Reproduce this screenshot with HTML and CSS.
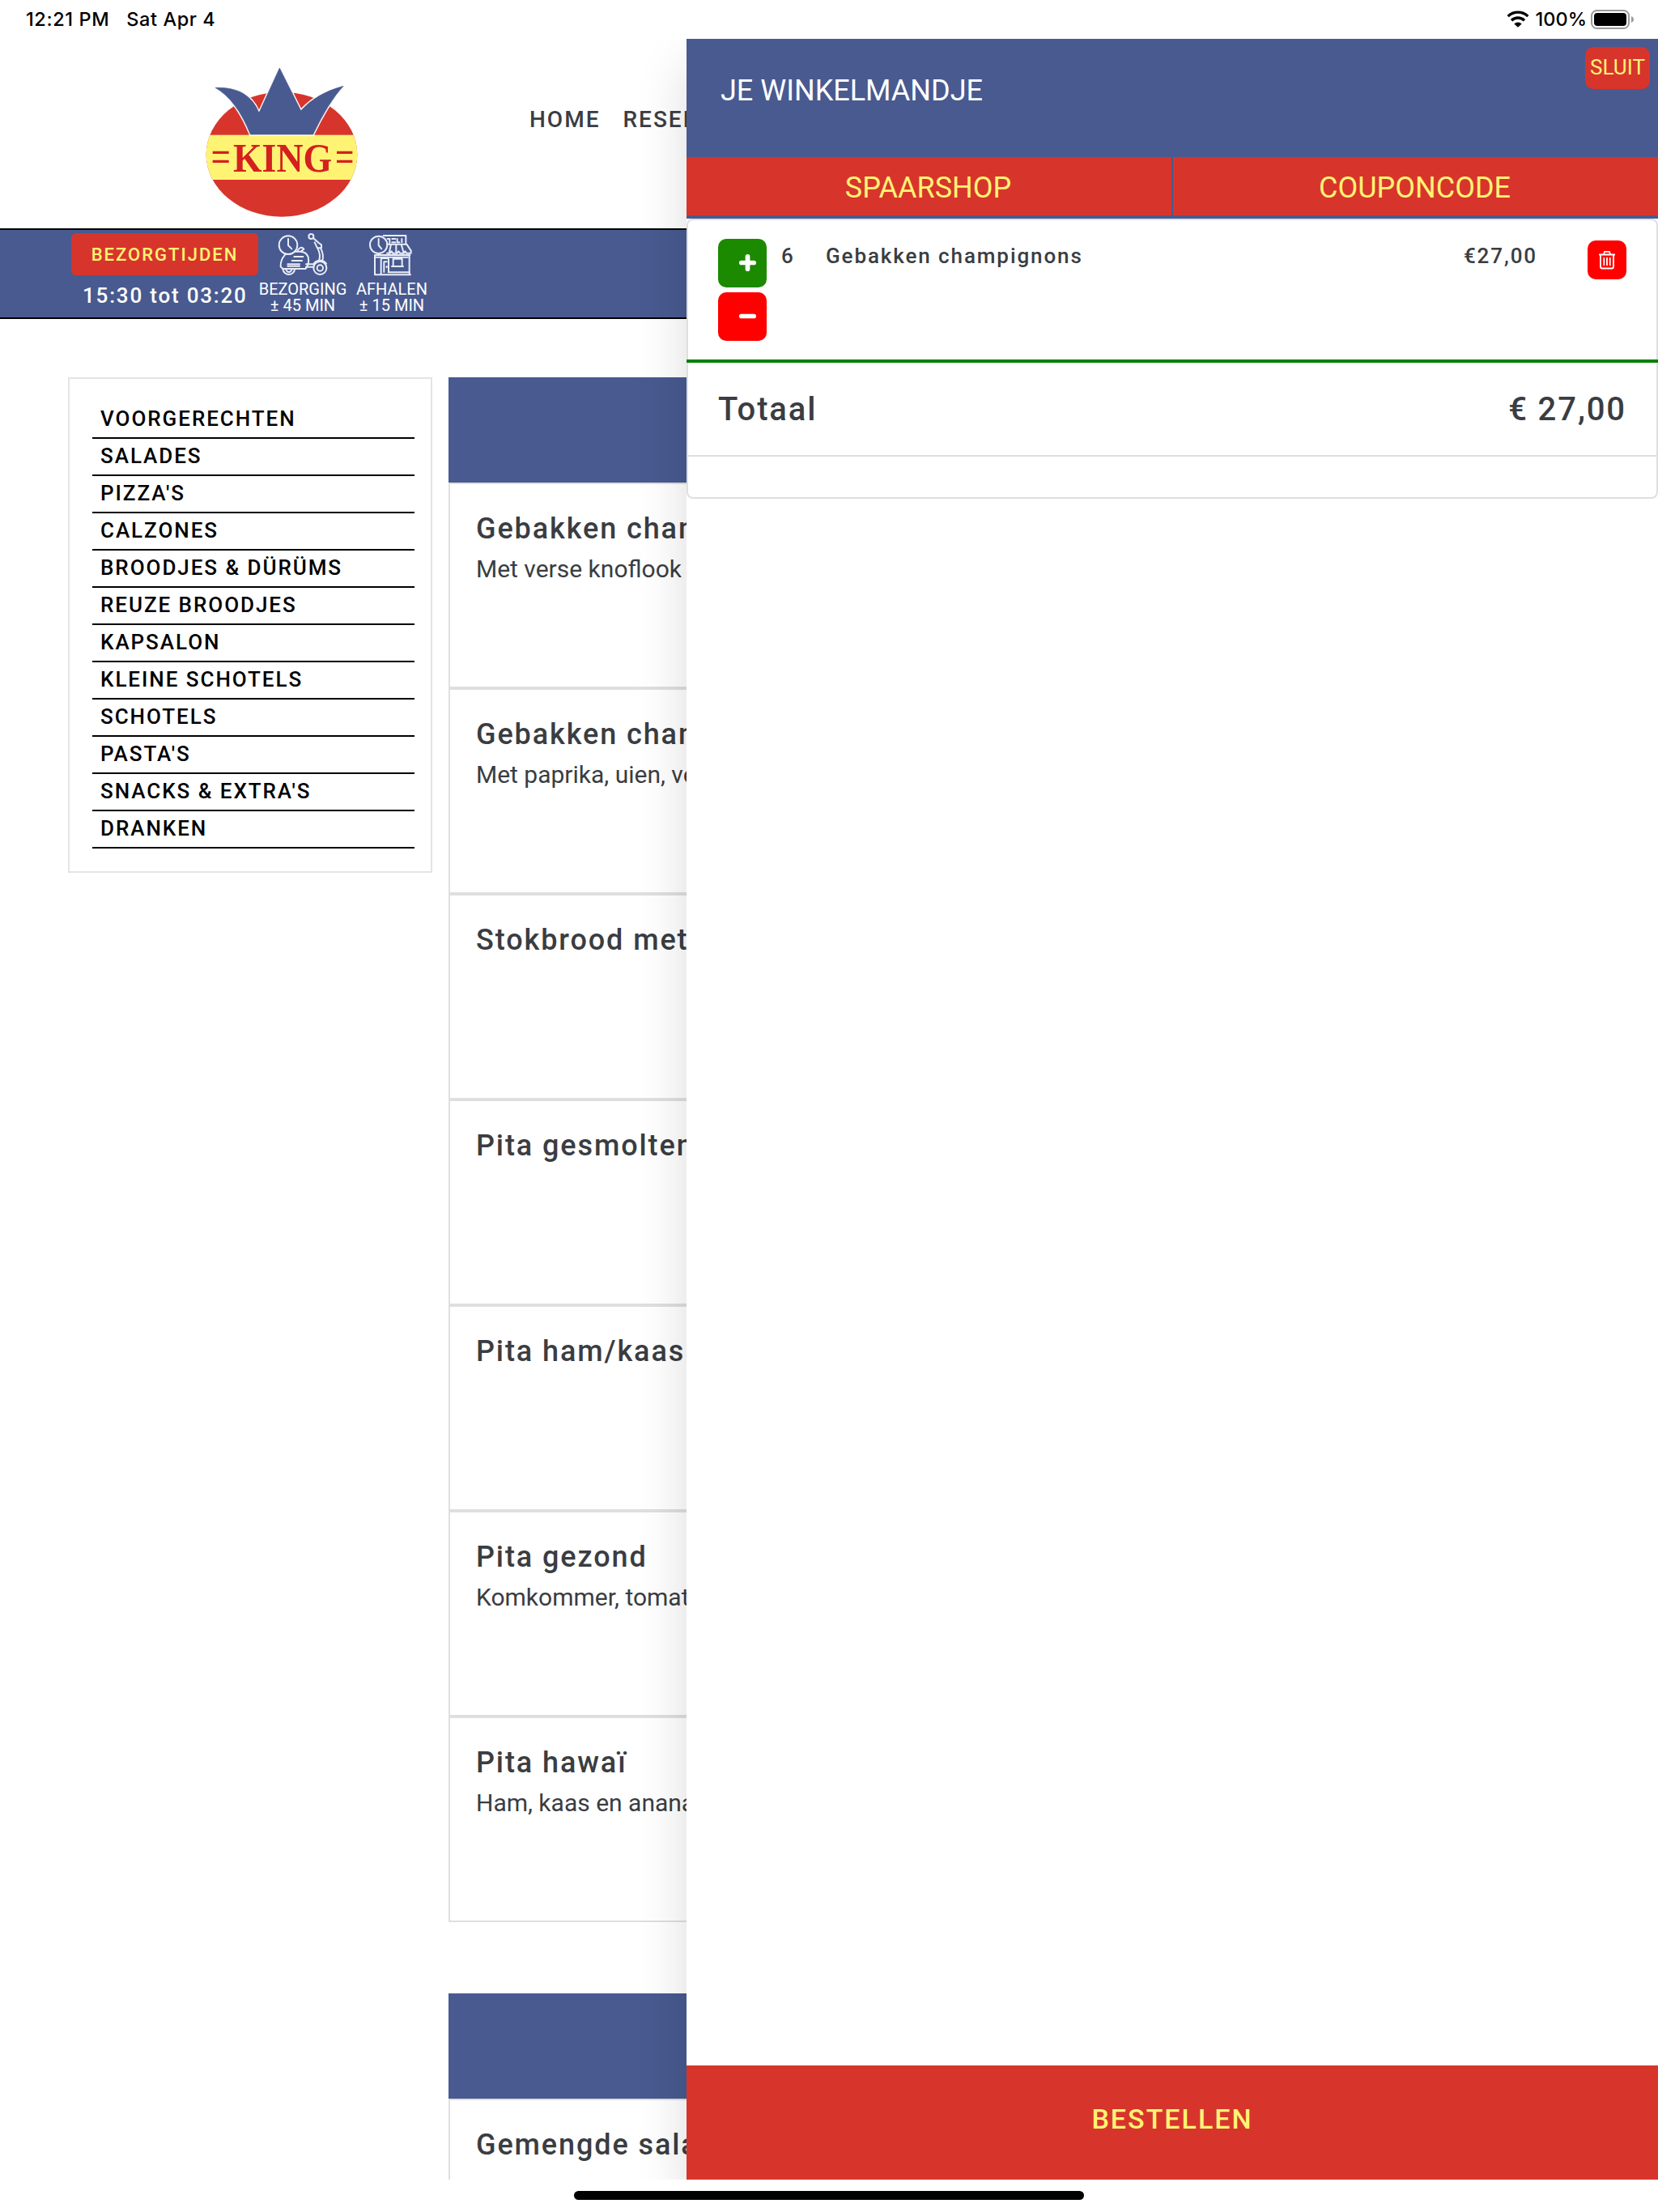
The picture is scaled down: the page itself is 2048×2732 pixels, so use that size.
FILE: index.html
```html
<!DOCTYPE html>
<html lang="nl">
<head>
    <meta charset="UTF-8">
    <meta name="viewport" content="width=device-width, initial-scale=1.0">
    <title>King - Bestellen</title>
    <link rel="stylesheet" href="styles.css">
</head>
<body>
    <div class="statusbar">
        <span class="time">12:21 PM</span>
        <span class="date">Sat Apr 4</span>
        <svg class="wifi" viewBox="0 0 84 62">
            <path d="M5 21a53 53 0 0 1 74 0" fill="none" stroke="#000" stroke-width="10"/>
            <path d="M18 36a35 35 0 0 1 48 0" fill="none" stroke="#000" stroke-width="10"/>
            <path d="M28 49a20 20 0 0 1 28 0L42 62z"/>
        </svg>
        <span class="percent">100%</span>
        <svg class="battery" viewBox="0 0 54 24">
            <rect x="1" y="1" width="46" height="22" rx="6.5" fill="none" stroke="#9b9b9b" stroke-width="2"/>
            <rect x="4" y="4" width="40" height="16" rx="4"/>
            <path d="M50 8c4 1.500 4 6.500 0 8z" fill="#9b9b9b"/>
        </svg>
    </div>

    <div class="page">
        <header class="header">
            <svg class="logo" viewBox="0 0 690 630">
                <clipPath id="ball"><ellipse cx="354" cy="362" rx="280" ry="231"/></clipPath>
                <g clip-path="url(#ball)">
                    <rect width="690" height="630" fill="#d7352c"/>
                    <rect y="290" width="690" height="166" fill="#fff374"/>
                    <path d="M108 115Q231 110 270 208L346 42L425 200Q482 136 582 109Q526 171 470 288H238Q186 159 108 115z" fill="#fff" stroke="#fff" stroke-width="10"/>
                </g>
                <path d="M108 115Q231 110 270 208L346 42L425 200Q482 136 582 109Q526 171 470 288H238Q186 159 108 115z" fill="#485a90" stroke="#485a90" stroke-width="2"/>
                <path d="M98 355h60M98 388h60M558 355h58M558 388h58" stroke="#d4201f" stroke-width="10"/>
                <text class="logo-text" x="174" y="427" textLength="366" lengthAdjust="spacingAndGlyphs">KING</text>
            </svg>
            <nav class="nav">
                <a>HOME</a>
                <a>RESERVEREN</a>
            </nav>
        </header>

        <div class="infobar">
            <div class="times">
                <button class="times-btn">BEZORGTIJDEN</button>
                <div class="times-text">15:30 tot 03:20</div>
            </div>
            <div class="info info-delivery">
                <!-- scooter -->
                <svg class="info-icon" viewBox="18 8 192 162" fill="none" stroke="#e9edf8" stroke-width="6" stroke-linejoin="round" stroke-linecap="round">
                    <ellipse cx="60" cy="55" rx="34" ry="34"/>
                    <path d="M60 32v24l13 13M95 76c6-12 15-16 23-6l-10 8M48 91c-11 13-17 27-16 44l8 8h84c10-11 13-29 10-44-5-14-16-20-31-20H84"/>
                    <path d="M82 98h33M74 113h37M58 126h44M58 133h44M40 143c4 28 40 28 45 0M52 146c4 12 17 12 21 0"/>
                    <circle cx="145" cy="23" r="9"/>
                    <path d="M153 29l20 18 10 7v12h-15l-10-21M169 66c8 16 11 31 5 48M181 68c8 17 11 31 5 46M126 126h25M126 136h25"/>
                    <circle cx="178" cy="140" r="24"/>
                    <circle cx="178" cy="140" r="11"/>
                    <path d="M153 127c9-19 38-20 48-3"/>
                </svg>
                <span>BEZORGING</span>
                <span>± 45 MIN</span>
            </div>
            <div class="info info-pickup">
                <!-- shop -->
                <svg class="info-icon" viewBox="356 8 164 162" fill="none" stroke="#e9edf8" stroke-width="6" stroke-linejoin="round" stroke-linecap="round">
                    <circle cx="394" cy="54" r="32"/>
                    <path d="M394 32v24l11 13M412 20h83v29M427 32h8v14M444 32h12M444 45h12M463 32v13h8M480 32v13M426 52h72l16 24v9h-17l-4-7-5 7h-15l-5-7-5 7h-17l-4-7-5 7h-12M440 52l-6 28M459 52v28M478 52l8 28"/>
                    <path d="M380 92v73h132M508 92v73M384 92h126M384 100h118M431 155v-46c0-3-2-5-5-5h-18c-3 0-5 2-5 5v56M414 155v-38h10M424 134v4M443 134h42M448 134v-28h33v28"/>
                    <path d="M430 156h78"/>
                </svg>
                <span>AFHALEN</span>
                <span>± 15 MIN</span>
            </div>
        </div>

        <div class="content">
            <ul class="categories">
                <li>VOORGERECHTEN</li>
                <li>SALADES</li>
                <li>PIZZA'S</li>
                <li>CALZONES</li>
                <li>BROODJES &amp; DÜRÜMS</li>
                <li>REUZE BROODJES</li>
                <li>KAPSALON</li>
                <li>KLEINE SCHOTELS</li>
                <li>SCHOTELS</li>
                <li>PASTA'S</li>
                <li>SNACKS &amp; EXTRA'S</li>
                <li>DRANKEN</li>
            </ul>

            <main class="menu">
                <section class="menu-section">
                    <div class="menu-head"></div>
                    <div class="dish">
                        <h3>Gebakken champignons</h3>
                        <p>Met verse knoflook</p>
                    </div>
                    <div class="dish">
                        <h3>Gebakken champignons</h3>
                        <p>Met paprika, uien, verse knoflook</p>
                    </div>
                    <div class="dish">
                        <h3>Stokbrood met</h3>
                    </div>
                    <div class="dish">
                        <h3>Pita gesmolten</h3>
                    </div>
                    <div class="dish">
                        <h3>Pita ham/kaas</h3>
                    </div>
                    <div class="dish">
                        <h3>Pita gezond</h3>
                        <p>Komkommer, tomaten</p>
                    </div>
                    <div class="dish">
                        <h3>Pita hawaï</h3>
                        <p>Ham, kaas en ananas</p>
                    </div>
                </section>
                <section class="menu-section">
                    <div class="menu-head"></div>
                    <div class="dish">
                        <h3>Gemengde salade</h3>
                    </div>
                </section>
            </main>
        </div>

        <aside class="cart">
            <div class="cart-head">
                <h2>JE WINKELMANDJE</h2>
                <button class="close-btn">SLUIT</button>
            </div>
            <div class="cart-tabs">
                <a>SPAARSHOP</a>
                <a>COUPONCODE</a>
            </div>
            <div class="cart-card">
                <div class="cart-item">
                    <div class="qty-buttons">
                        <button class="qty-btn plus">
                            <svg viewBox="0 0 22 22"><path d="M11 3v16M3 11h16" stroke="#fff" stroke-width="6" stroke-linecap="round"/></svg>
                        </button>
                        <button class="qty-btn minus">
                            <svg viewBox="0 0 22 22"><path d="M3 11h16" stroke="#fff" stroke-width="6" stroke-linecap="round"/></svg>
                        </button>
                    </div>
                    <span class="qty">6</span>
                    <span class="name">Gebakken champignons</span>
                    <span class="price">€27,00</span>
                    <button class="trash-btn">
                        <svg viewBox="0 0 22 24" fill="none" stroke="#fff" stroke-width="1.800">
                            <path d="M1 5.500h20M3 6v14.500c0 1.200.8 2 2 2h12c1.200 0 2-.8 2-2V6M7 5l1-3.200h6L15 5M7.300 9v10M11 9v10M14.700 9v10"/>
                        </svg>
                    </button>
                </div>
                <div class="cart-total">
                    <span>Totaal</span>
                    <span>€ 27,00</span>
                </div>
                <div class="cart-extra"></div>
            </div>
            <button class="order-btn">BESTELLEN</button>
        </aside>
    </div>

    <div class="home-area">
        <div class="home-bar"></div>
    </div>
</body>
</html>
```
FILE: styles.css
```css
* {
    box-sizing: border-box;
}
body {
    margin: 0;
    width: 2048px;
    height: 2732px;
    overflow: hidden;
    background-color: #fff;
    color: #3a3d42;
    font-family: Roboto, sans-serif;
}
h2, h3, p, ul {
    margin: 0;
    padding: 0;
    font-weight: 400;
}
svg {
    display: block;
    flex: none;
}
button {
    border: none;
    padding: 0;
    font-family: inherit;
}

/* status bar */
.statusbar {
    display: flex;
    align-items: center;
    height: 48px;
    padding: 0 29px 1px 32px;
    color: #000;
    font-family: Inter, sans-serif;
    font-size: 23.5px;
    font-weight: 500;
    letter-spacing: 0.6px;
}
.date {
    margin-left: 21px;
}
.wifi {
    width: 28px;
    height: 21px;
    margin-left: auto;
}
.percent {
    margin: 0 5px 0 8px;
    letter-spacing: 0;
}
.battery {
    width: 54px;
    height: 24px;
}

.page {
    position: relative;
    height: 2644px;
    overflow: hidden;
}

/* header */
.header {
    display: flex;
    height: 234px;
    padding-left: 230px;
}
.logo {
    width: 230px;
    height: 210px;
    margin-top: 22px;
}
.logo-text {
    font-family: "Liberation Serif", serif;
    font-size: 154px;
    font-weight: 700;
    fill: #d4201f;
}
.nav {
    display: flex;
    gap: 28px;
    margin: 84px 0 0 194px;
    font-size: 28px;
    line-height: 32px;
    font-weight: 500;
    letter-spacing: 2px;
}
.infobar {
    display: flex;
    height: 112px;
    padding-left: 88px;
    border-top: 2px solid #000;
    border-bottom: 2px solid #000;
    background-color: #485a90;
    color: #fff;
}
.times {
    width: 231px;
    padding-top: 4px;
}
.times-btn {
    display: block;
    width: 231px;
    height: 52px;
    border-radius: 6px;
    background-color: #d7352c;
    color: #fff374;
    font-size: 22px;
    font-weight: 500;
    letter-spacing: 2px;
}
.times-text {
    padding: 9px 0 0 14px;
    font-size: 26px;
    line-height: 32px;
    font-weight: 500;
    letter-spacing: 1.8px;
}
.info {
    display: flex;
    flex-direction: column;
    align-items: center;
    width: 110px;
    padding-top: 3px;
    font-size: 20px;
    line-height: 20px;
}
.info-icon {
    height: 54px;
    margin-bottom: 6px;
}
.info-pickup .info-icon {
    margin-right: 4px;
}

/* menu */
.content {
    display: flex;
    align-items: flex-start;
    padding: 72px 84px 0;
}
.categories {
    width: 450px;
    margin-right: 20px;
    padding: 28px 20px 28px 28px;
    border: 2px solid #e4e4e4;
    color: #000;
    list-style: none;
}
.categories li {
    height: 46px;
    padding-left: 10px;
    border-bottom: 2px solid #000;
    font-size: 26px;
    line-height: 42px;
    font-weight: 500;
    letter-spacing: 1.95px;
}
.menu {
    flex: 1;
}
.menu-section {
    margin-bottom: 88px;
}
.menu-head {
    height: 130px;
    background-color: #485a90;
}
.dish {
    height: 254px;
    padding: 33px 32px;
    border: 2px solid #dfdfdf;
}
.dish h3 {
    font-size: 36px;
    line-height: 44px;
    font-weight: 500;
    letter-spacing: 1.9px;
}
.dish p {
    margin-top: 6px;
    font-size: 30px;
    line-height: 44px;
}

/* cart panel over the page */
.cart {
    position: absolute;
    top: 0;
    right: 0;
    bottom: 0;
    display: flex;
    flex-direction: column;
    width: 1200px;
    background-color: #fff;
    box-shadow: 0 32px 60px rgba(0, 0, 0, 0.14);
}
.cart-head {
    display: flex;
    justify-content: space-between;
    align-items: flex-start;
    height: 146px;
    padding: 10px 10px 0 42px;
    background-color: #485a90;
    color: #fff;
}
.cart-head h2 {
    margin-top: 32px;
    font-size: 36px;
    line-height: 44px;
}
.close-btn {
    width: 80px;
    height: 52px;
    padding-bottom: 2px;
    border-radius: 10px;
    background-color: #d7352c;
    color: #fff374;
    font-size: 26px;
}
.cart-tabs {
    display: flex;
    gap: 2px;
    padding-bottom: 4px;
    background-color: #485a90;
}
.cart-tabs a {
    flex: 1;
    height: 72px;
    padding-right: 2px;
    background-color: #d7352c;
    color: #fff374;
    font-size: 36px;
    line-height: 77px;
    text-align: center;
}
.cart-card {
    border: 2px solid #dfdfdf;
    border-radius: 8px;
}
.cart-item {
    display: flex;
    align-items: flex-start;
    height: 176px;
    margin: 0 -2px;
    padding: 23px 39px 0;
    border-bottom: 4px solid #008000;
    font-size: 26px;
    line-height: 42px;
    font-weight: 500;
    letter-spacing: 1.9px;
}
.qty-buttons {
    display: flex;
    flex-direction: column;
    gap: 6px;
}
.qty-btn {
    display: flex;
    align-items: center;
    width: 60px;
    height: 60px;
    padding: 0 0 2px 26px;
    border-radius: 10px;
}
.qty-btn svg {
    width: 21px;
    height: 21px;
}
.plus {
    background-color: #1c8a00;
}
.minus {
    background-color: #f00;
}
.qty {
    width: 73px;
    padding-left: 18px;
}
.name {
    flex: 1;
}
.price {
    margin-right: 62px;
    letter-spacing: 1.9px;
}
.trash-btn {
    display: flex;
    align-items: center;
    justify-content: center;
    width: 48px;
    height: 48px;
    margin-top: 2px;
    border-radius: 10px;
    background-color: #f00;
}
.trash-btn svg {
    width: 22px;
    height: 24px;
}
.cart-total {
    display: flex;
    justify-content: space-between;
    height: 116px;
    padding: 0 37px;
    border-bottom: 2px solid #dfdfdf;
    font-size: 40px;
    line-height: 115px;
    font-weight: 500;
    letter-spacing: 1.9px;
}
.cart-extra {
    height: 50px;
}
.order-btn {
    height: 141px;
    margin-top: auto;
    padding-bottom: 10px;
    background-color: #d7352c;
    color: #fff374;
    font-size: 34px;
    font-weight: 500;
    letter-spacing: 2px;
}

/* home indicator */
.home-area {
    display: flex;
    justify-content: center;
    padding-top: 14px;
}
.home-bar {
    width: 630px;
    height: 11px;
    border-radius: 6px;
    background-color: #000;
}
```
